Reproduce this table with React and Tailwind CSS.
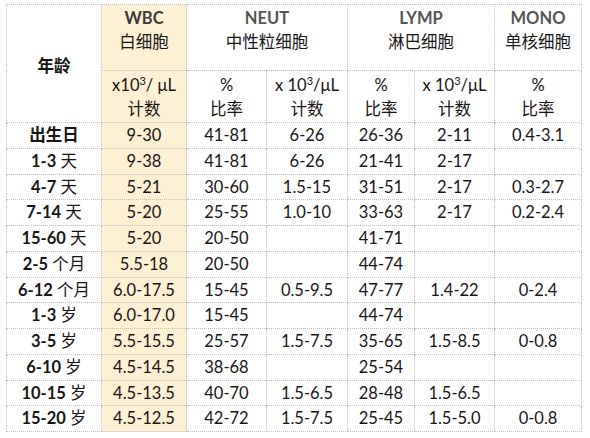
const rows = [
  ['出生日', '', '9-30', '41-81', '6-26', '26-36', '2-11', '0.4-3.1'],
  ['1-3', '天', '9-38', '41-81', '6-26', '21-41', '2-17', ''],
  ['4-7', '天', '5-21', '30-60', '1.5-15', '31-51', '2-17', '0.3-2.7'],
  ['7-14', '天', '5-20', '25-55', '1.0-10', '33-63', '2-17', '0.2-2.4'],
  ['15-60', '天', '5-20', '20-50', '', '41-71', '', ''],
  ['2-5', '个月', '5.5-18', '20-50', '', '44-74', '', ''],
  ['6-12', '个月', '6.0-17.5', '15-45', '0.5-9.5', '47-77', '1.4-22', '0-2.4'],
  ['1-3', '岁', '6.0-17.0', '15-45', '', '44-74', '', ''],
  ['3-5', '岁', '5.5-15.5', '25-57', '1.5-7.5', '35-65', '1.5-8.5', '0-0.8'],
  ['6-10', '岁', '4.5-14.5', '38-68', '', '25-54', '', ''],
  ['10-15', '岁', '4.5-13.5', '40-70', '1.5-6.5', '28-48', '1.5-6.5', ''],
  ['15-20', '岁', '4.5-12.5', '42-72', '1.5-7.5', '25-45', '1.5-5.0', '0-0.8'],
];

const cell = 'border border-dotted border-[#bdbdbd] text-center p-0';
const wbc = 'bg-[#fdf0d3]';

const Unit = ({ space }) => (
  <span>
    x{space ? ' ' : ''}10<sup className="text-[11px] leading-none relative -top-[6px]">3</sup>/{space ? '' : ' '}μL
  </span>
);

export default function App() {
  return (
    <div
      className="w-[590px] h-[438px] bg-white pt-[4px] pl-[6px] text-[16.5px] text-[#161616]"
      style={{ fontFamily: 'Lato, "Noto Sans CJK SC", sans-serif' }}
    >
      <table className="table-fixed border-collapse w-[575px]">
        <colgroup>
          <col className="w-[95px]" />
          <col className="w-[85px]" />
          <col className="w-[80px]" />
          <col className="w-[81px]" />
          <col className="w-[67px]" />
          <col className="w-[80px]" />
          <col className="w-[87px]" />
        </colgroup>
        <thead>
          <tr className="h-[66px]">
            <th rowSpan={2} className={`${cell} font-bold align-middle pt-[6px]`}>年龄</th>
            <th className={`${cell} ${wbc} align-top font-normal leading-[24px] pt-[1px]`}>
              <div className="font-bold text-[#3a3a3a]">WBC</div>
              <div>白细胞</div>
            </th>
            <th colSpan={2} className={`${cell} align-top font-normal leading-[24px] pt-[1px]`}>
              <div className="font-bold text-[#555555]">NEUT</div>
              <div>中性粒细胞</div>
            </th>
            <th colSpan={2} className={`${cell} align-top font-normal leading-[24px] pt-[1px]`}>
              <div className="font-bold text-[#555555]">LYMP</div>
              <div>淋巴细胞</div>
            </th>
            <th className={`${cell} align-top font-normal leading-[24px] pt-[1px]`}>
              <div className="font-bold text-[#555555]">MONO</div>
              <div>单核细胞</div>
            </th>
          </tr>
          <tr className="h-[52px] font-normal leading-[24px]">
            <th className={`${cell} ${wbc} font-normal`}>
              <div><Unit /></div>
              <div>计数</div>
            </th>
            <th className={`${cell} font-normal`}>
              <div>%</div>
              <div>比率</div>
            </th>
            <th className={`${cell} font-normal`}>
              <div><Unit space /></div>
              <div>计数</div>
            </th>
            <th className={`${cell} font-normal`}>
              <div>%</div>
              <div>比率</div>
            </th>
            <th className={`${cell} font-normal`}>
              <div><Unit space /></div>
              <div>计数</div>
            </th>
            <th className={`${cell} font-normal`}>
              <div>%</div>
              <div>比率</div>
            </th>
          </tr>
        </thead>
        <tbody>
          {rows.map((r, i) => (
            <tr key={i} className="h-[25.6px]">
              <td className={`${cell} font-bold`}>
                {r[0]}
                {r[1] && <span className="font-normal"> {r[1]}</span>}
              </td>
              <td className={`${cell} ${wbc}`}>{r[2]}</td>
              <td className={cell}>{r[3]}</td>
              <td className={cell}>{r[4]}</td>
              <td className={cell}>{r[5]}</td>
              <td className={cell}>{r[6]}</td>
              <td className={cell}>{r[7]}</td>
            </tr>
          ))}
        </tbody>
      </table>
    </div>
  );
}
